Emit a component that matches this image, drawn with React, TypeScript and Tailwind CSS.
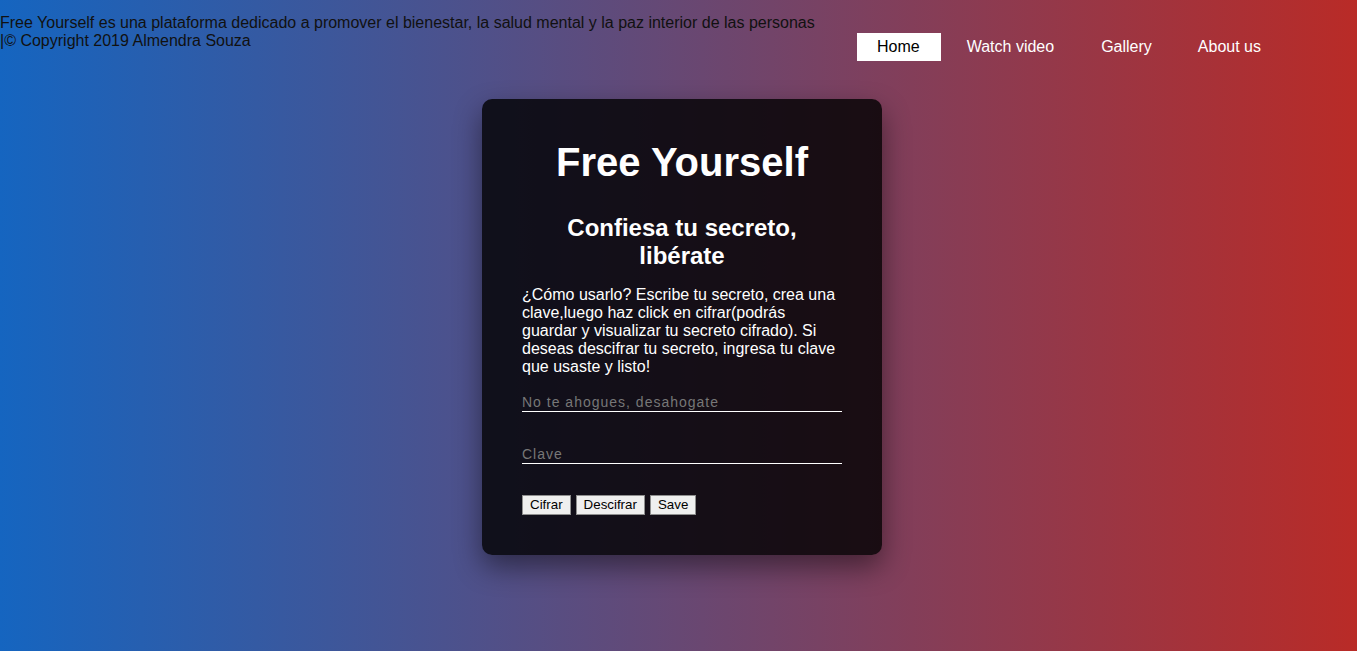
import React from "react";

export default function App() {
  return (
    <div
      className="min-h-screen w-full bg-[linear-gradient(to_right,#1565c0,#b92b27)] text-[16px] leading-[18px] overflow-hidden"
      style={{ fontFamily: '"Liberation Sans", Arial, sans-serif' }}
    >
      <header className="flex items-start justify-between">
        <div className="mt-[14px] text-[#111]">
          Free Yourself es una plataforma dedicado a promover el bienestar, la salud mental y la paz interior de las personas
          <br />
          |© Copyright 2019 Almendra Souza
        </div>
        <nav className="mt-[33px] mr-[76px] flex shrink-0">
          <a className="block pl-[20px] pr-[21px] py-[5px] bg-white text-black leading-[18.4px]">Home</a>
          <a className="block ml-[6px] px-[20px] py-[5px] text-white leading-[18.4px]">Watch video</a>
          <a className="block ml-[7px] px-[20px] py-[5px] text-white leading-[18.4px]">Gallery</a>
          <a className="block ml-[6px] px-[20px] py-[5px] text-white leading-[18.4px]">About us</a>
        </nav>
      </header>

      <div className="flex justify-center pl-[7px] mt-[38px]">
        <div className="w-[400px] rounded-[10px] bg-black/80 p-[40px] text-white shadow-[0_12px_28px_rgba(0,0,0,0.45)]">
          <h1 className="text-center text-[40px] font-bold leading-[46px]">Free Yourself</h1>
          <h2 className="mt-[29px] text-center text-[24px] font-bold leading-[28px]">
            Confiesa tu secreto, libérate
          </h2>
          <p className="mt-[16px] text-[16px] leading-[18px]">
            ¿Cómo usarlo? Escribe tu secreto, crea una clave,luego haz click en cifrar(podrás guardar y visualizar tu secreto cifrado). Si deseas descifrar tu secreto, ingresa tu clave que usaste y listo!
          </p>
          <div className="mt-[18px] flex flex-col gap-[34px]">
            <input
              placeholder="No te ahogues, desahogate"
              className="w-full bg-transparent border-b border-white pb-[1px] text-[14px] leading-[16px] tracking-[1px] text-white placeholder:text-[#777] outline-none"
            />
            <input
              placeholder="Clave"
              className="w-full bg-transparent border-b border-white pb-[1px] text-[14px] leading-[16px] tracking-[1px] text-white placeholder:text-[#777] outline-none"
            />
          </div>
          <div className="mt-[31px] flex gap-[5px]">
            {["Cifrar", "Descifrar", "Save"].map((b) => (
              <button
                key={b}
                className="bg-[#efefef] border border-[#8f8f8f] px-[7px] py-[1px] text-[13.33px] leading-[16px] text-black"
              >
                {b}
              </button>
            ))}
          </div>
        </div>
      </div>
    </div>
  );
}
